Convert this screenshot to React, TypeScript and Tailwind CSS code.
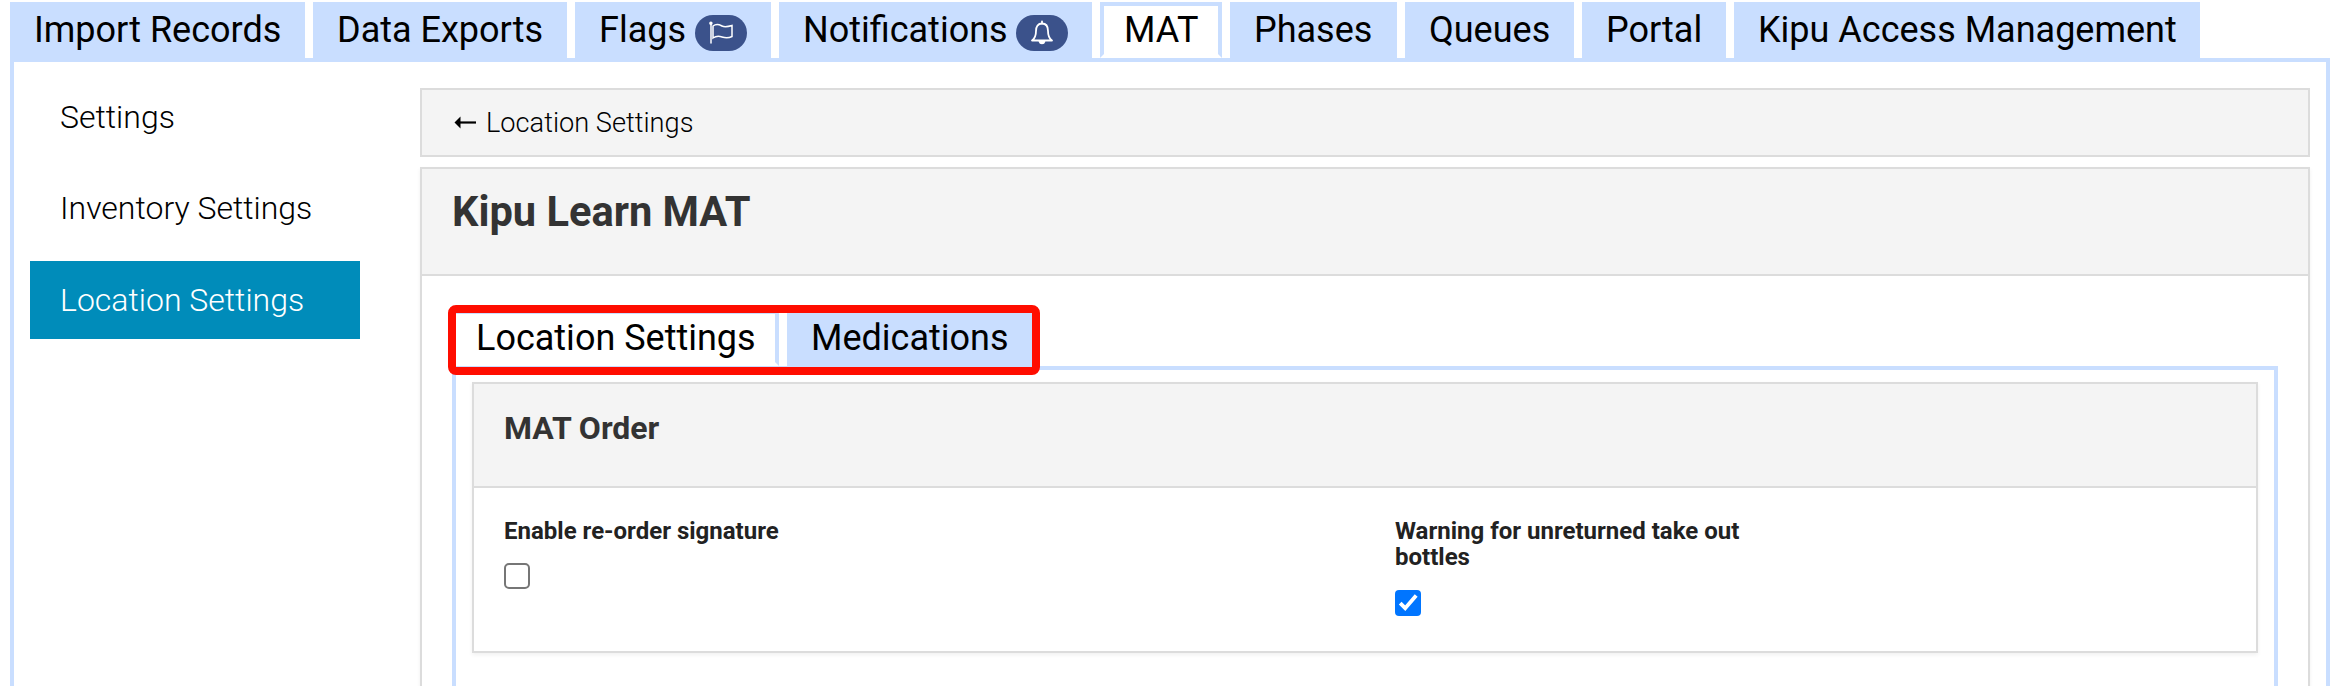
import React from 'react';

type Tab = {
  label: string;
  icon?: 'flag' | 'bell';
  width: string;
};

const mainTabs: Tab[] = [
  { label: 'Import Records', width: 'w-[295px]' },
  { label: 'Data Exports', width: 'w-[254px]' },
  { label: 'Flags', icon: 'flag', width: 'w-[196px]' },
  { label: 'Notifications', icon: 'bell', width: 'w-[313px]' },
  { label: 'MAT', width: 'w-[122px]' },
  { label: 'Phases', width: 'w-[167px]' },
  { label: 'Queues', width: 'w-[169px]' },
  { label: 'Portal', width: 'w-[144px]' },
  { label: 'Kipu Access Management', width: 'w-[466px]' },
];

const locationTabs: Tab[] = [
  { label: 'Location Settings', width: 'w-[327px]' },
  { label: 'Medications', width: 'w-[248px]' },
];

const sections = ['Settings', 'Inventory Settings', 'Location Settings'];

export default function App() {
  return (
    <div className="h-[686px] w-[2350px] overflow-hidden bg-white pl-[10px] pr-5 pt-0.5 font-[Roboto,sans-serif] text-black">
      <TabBar tabs={mainTabs} active="MAT" />
      <div className="flex h-[700px] border-4 border-[#c9deff] pl-4 pr-4 pt-4">
        <Sidebar />
        <main className="ml-[60px] mt-[10px] flex-1">
          <div className="flex h-[69px] items-center gap-2 border-2 border-[#dcdcdc] bg-[#f4f4f4] pl-8 text-[27.2px] font-light">
            <BackArrow />
            <span className="pt-0.5">Location Settings</span>
          </div>
          <div className="mt-[10px] h-[600px] border-2 border-[#dcdcdc] shadow-[0_2px_4px_rgba(0,0,0,0.06)]">
            <h1 className="h-[107px] border-b-2 border-[#dcdcdc] bg-[#f4f4f4] pl-[30px] pt-[19px] text-[41.6px] font-bold leading-[48px] text-[#333]">
              Kipu Learn MAT
            </h1>
            <div className="pl-[30px] pr-[30px] pt-[34px]">
              <div className="relative">
                <TabBar tabs={locationTabs} active="Location Settings" />
                <div className="absolute -left-1 -top-[5px] h-[70px] w-[592px] rounded-[8px] border-8 border-[#ff0d00]" />
              </div>
              <div className="h-[400px] border-4 border-[#c9deff] px-4 pt-3">
                <OrderCard />
              </div>
            </div>
          </div>
        </main>
      </div>
    </div>
  );
}

function TabBar({ tabs, active }: { tabs: Tab[]; active: string }) {
  return (
    <div className="flex h-14 gap-2">
      {tabs.map((tab) => (
        <div
          key={tab.label}
          className={`flex shrink-0 items-start whitespace-nowrap border-4 border-[#c9deff] pl-5 pt-[3px] text-[36px] leading-[42px] ${tab.width} ${
            tab.label === active ? 'border-b-white bg-white' : 'bg-[#c9deff]'
          }`}
        >
          {tab.label}
          {tab.icon && (
            <span className="ml-[8.5px] mt-[6px] flex h-9 w-[52px] items-center justify-center rounded-[18px] bg-[#3b528b]">
              {tab.icon === 'flag' ? <FlagIcon /> : <BellIcon />}
            </span>
          )}
        </div>
      ))}
    </div>
  );
}

function Sidebar() {
  return (
    <nav className="flex w-[330px] flex-col gap-[13.5px]">
      {sections.map((section) => (
        <a
          key={section}
          className={`flex h-[78px] items-center pl-[30px] text-[32px] font-light ${
            section === 'Location Settings' ? 'bg-[#008cba] text-white' : 'pb-[1px]'
          }`}
        >
          {section}
        </a>
      ))}
    </nav>
  );
}

function OrderCard() {
  return (
    <section className="h-[271px] border-2 border-[#dcdcdc] shadow-[0_2px_4px_rgba(0,0,0,0.06)]">
      <h2 className="h-[104px] border-b-2 border-[#dcdcdc] bg-[#f4f4f4] pl-[30px] pt-[24px] text-[32px] font-bold leading-[40px] text-[#333]">
        MAT Order
      </h2>
      <div className="grid grid-cols-2 pt-[30px] text-2xl font-bold leading-[26px] text-[#222]">
        <Option label="Enable re-order signature" />
        <Option label="Warning for unreturned take out bottles" checked />
      </div>
    </section>
  );
}

function Option({ label, checked }: { label: string; checked?: boolean }) {
  return (
    <label className="flex flex-col items-start pl-[30px]">
      <span className="w-[370px]">{label}</span>
      {checked ? (
        <span className="mt-5 flex size-[26px] items-center justify-center rounded bg-[#0075ff]">
          <svg className="size-[26px]" viewBox="0 0 26 26" fill="none" stroke="#fff" strokeWidth="3.8">
            <path d="M5.2 13.2l5 5L21.2 5.4" />
          </svg>
        </span>
      ) : (
        <span className="mt-[19px] size-[26px] rounded-[5px] border-2 border-[#767676] bg-white" />
      )}
    </label>
  );
}

function BackArrow() {
  return (
    <svg className="h-4 w-6" viewBox="0 0 24 16">
      <path d="M0.5 7.5L6.5 1.5v12z" fill="#000" />
      <path d="M5 7.5h17" stroke="#000" strokeWidth="2.2" />
    </svg>
  );
}

function FlagIcon() {
  return (
    <svg className="h-6 w-6" viewBox="0 0 24 24" fill="none" stroke="#fff" strokeWidth="1.5" strokeLinecap="round">
      <circle cx="1.9" cy="2.2" r="1" fill="#fff" />
      <path d="M2 2v20" />
      <path d="M4 5c4-3 7-1 9 0s5 1 10-.5v11c-4 2-7 1.500-10 .5s-6-1-9 1z" />
    </svg>
  );
}

function BellIcon() {
  return (
    <svg className="h-7 w-6" viewBox="0 0 24 28" fill="none" stroke="#fff" strokeWidth="1.8" strokeLinejoin="round">
      <path d="M12 4.500c-4 0-6 3-6 7.500s-1 7.500-4 9.500h20c-3-2-4-5-4-9.500s-2-7.500-6-7.500z" />
      <path d="M12 2.500v2" strokeLinecap="round" />
      <path d="M9.500 22.500a2.600 2.600 0 0 0 5 0z" fill="#fff" />
    </svg>
  );
}
